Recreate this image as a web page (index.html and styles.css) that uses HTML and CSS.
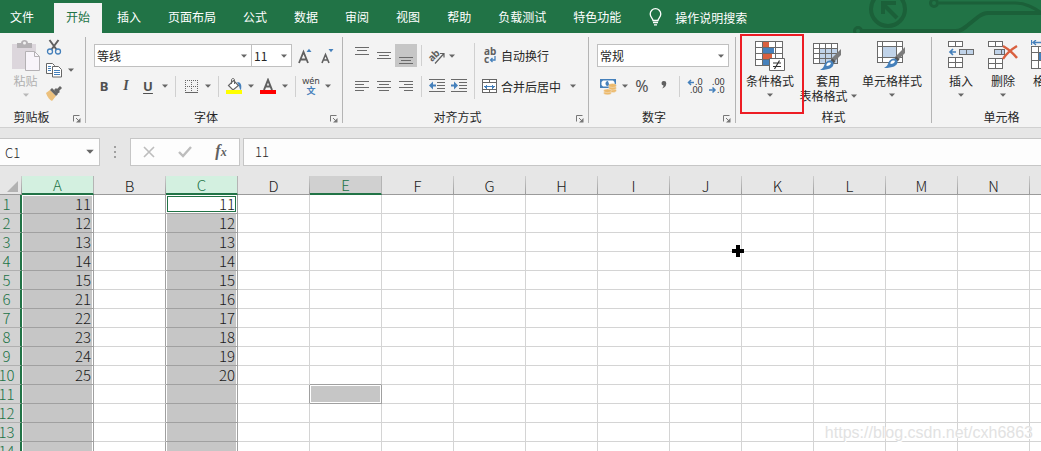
FILE: index.html
```html
<!DOCTYPE html>
<html lang="zh-CN">
<head>
<meta charset="utf-8">
<title>工作簿</title>
<link rel="stylesheet" href="styles.css">
</head>
<body>
<svg class="defs" width="0" height="0" aria-hidden="true">
  <symbol id="caret" viewBox="0 0 6 4"><path d="M0 0.5h6L3 3.8z" fill="currentColor"/></symbol>
  <symbol id="launch" viewBox="0 0 8 8"><path d="M.5 6.500V.5H6.500M3 3l3 3" fill="none" stroke="#777"/><path d="M7.500 3v4.500H3z" fill="#777"/></symbol>
  <symbol id="brush" viewBox="0 0 24 22"><path d="M22 0v6l-7 7-3-3z" fill="#7b7b7b"/><path d="M13.500 9.500l3 3-2 2-3-3z" fill="#555"/><path d="M10.500 11.500c2-.5 4.500 1.500 4 4-.6 3-4 5.500-13.500 5.500 3-1.500 3.500-3 4.500-5.500.8-2 2.500-3.600 5-4z" fill="#4580bb"/><path d="M7.500 15.500c1-2 3-2.500 4.500-1.500-.5 2-2 3-4.500 3z" fill="#fff"/></symbol>
</svg>

<header class="tabs">
  <svg class="circuit" width="190" height="33" viewBox="0 0 190 33" fill="none" stroke="#1b6039" stroke-width="4" aria-hidden="true">
    <circle cx="37" cy="9" r="17"/><path d="M46 18L32 4M32 14V3h13"/>
    <circle cx="83" cy="3" r="3.500" stroke-width="3"/><path d="M88 3h76c10 0 18 4 30 12" stroke-width="3"/>
    <circle cx="7" cy="31" r="3.500" stroke-width="3"/><path d="M11 31h94c6 0 8-3 12-6l10-8c4-3 6-4 10-4h53"/>
  </svg>
  <nav class="tab-list">
    <button class="tab file">文件</button>
    <button class="tab active">开始</button>
    <button class="tab">插入</button>
    <button class="tab">页面布局</button>
    <button class="tab">公式</button>
    <button class="tab">数据</button>
    <button class="tab">审阅</button>
    <button class="tab">视图</button>
    <button class="tab">帮助</button>
    <button class="tab">负载测试</button>
    <button class="tab">特色功能</button>
  </nav>
  <button class="tell-me">
    <svg width="13" height="18" viewBox="0 0 13 18" fill="none" stroke="#fff" stroke-width="1.300"><path d="M4 12.500c0-2-2.800-3.200-2.800-6.500a5.300 5.300 0 0 1 10.600 0c0 3.300-2.800 4.500-2.800 6.500zM4 14.500h5M5 16.800h3"/></svg>
    操作说明搜索
  </button>
</header>

<main class="ribbon">
  <section class="group clipboard">
    <div class="body">
      <button class="big paste" disabled>
        <svg width="28" height="32" viewBox="0 0 28 32"><path d="M0 4h24v25H0z" fill="#dcd6dc"/><path d="M5 3h4c0-4 7-4 7 0h4v5H5z" fill="#b4b1b4"/><circle cx="12.500" cy="3" r="1.500" fill="#f3f3f3"/><path d="M13.500 11.500h9l5 5v14h-14z" fill="#f8f4fa" stroke="#b4b1b4"/><path d="M22.500 11.500v5h5" fill="none" stroke="#b4b1b4"/></svg>
        <span>粘贴</span>
        <svg class="caret"><use href="#caret"/></svg>
      </button>
      <div class="stack">
        <div class="line"><button class="tool" aria-label="剪切">
          <svg width="16" height="16" viewBox="0 0 16 16" fill="none"><path d="M3.500 1l7 9.500M12.500 1l-7 9.500" stroke="#606060" stroke-width="2"/><circle cx="4" cy="12.500" r="2.500" stroke="#4580bb" stroke-width="1.300"/><circle cx="12" cy="12.500" r="2.500" stroke="#4580bb" stroke-width="1.300"/></svg></button></div>
        <div class="line"><button class="tool" aria-label="复制">
          <svg width="16" height="15" viewBox="0 0 16 15" fill="#fff" stroke="#666"><path d="M.5.500h6l2 2v8h-8z"/><path d="M2 3.500h3M2 5.500h3M2 7.500h3" stroke="#4580bb"/><path d="M6.500 3.500h6l3 3v7.500h-9z"/><path d="M8 7.500h6M8 9.500h6M8 11.500h6" stroke="#4580bb"/></svg></button><button class="drop" aria-label="复制选项"><svg class="caret"><use href="#caret"/></svg></button></div>
        <div class="line"><button class="tool" aria-label="格式刷">
          <svg width="17" height="15" viewBox="0 0 17 15"><path d="M0 7l4-3 6 6-4 5c-2-1-5-4-6-8z" fill="#ecc07c"/><path d="M4 4l2-2 6 6-2 2z" fill="#666"/><path d="M8 4l2-2 1 1 3-3 2 2-3 3 1 1-3 2z" fill="#666"/></svg></button></div>
      </div>
    </div>
    <footer class="caption"><h2>剪贴板</h2><button class="launcher" aria-label="剪贴板设置"><svg width="8" height="8"><use href="#launch"/></svg></button></footer>
  </section>

  <section class="group font">
    <div class="body rows">
      <div class="line fields">
        <label class="combo family"><select aria-label="字体"><option>等线</option></select><svg class="caret"><use href="#caret"/></svg></label>
        <label class="combo size"><select aria-label="字号"><option>11</option></select><svg class="caret"><use href="#caret"/></svg></label>
        <button class="tool grow" aria-label="增大字号"><svg width="15" height="16" viewBox="0 0 15 16"><path d="M1 15L5.500 4 10 15M2.700 11.500h5.600" fill="none" stroke="#606060" stroke-width="1.800"/><path d="M8.500 4h5L11 .8z" fill="#4580bb"/></svg></button>
        <button class="tool" aria-label="减小字号"><svg width="15" height="16" viewBox="0 0 15 16"><path d="M2 15L5.500 6.500 9 15M3.200 12h4.600" fill="none" stroke="#606060" stroke-width="1.600"/><path d="M8.500 1h5L11 4.200z" fill="#4580bb"/></svg></button>
      </div>
      <div class="line format">
        <button class="tool letter">B</button>
        <button class="tool letter italic">I</button>
        <button class="tool letter underline">U</button>
        <button class="drop" aria-label="下划线选项"><svg class="caret"><use href="#caret"/></svg></button>
        <i class="sep"></i>
        <button class="tool" aria-label="边框"><svg width="13" height="13" viewBox="0 0 13 13" shape-rendering="crispEdges" fill="none" stroke="#666"><path d="M0 .5h13M0 6.500h13M.5 0v12M6.500 0v12M12.500 0v12" stroke-dasharray="1 1"/><path d="M0 12.500h13"/></svg></button>
        <button class="drop" aria-label="边框选项"><svg class="caret"><use href="#caret"/></svg></button>
        <i class="sep"></i>
        <button class="tool" aria-label="填充颜色"><svg width="16" height="16" viewBox="0 0 16 16"><path d="M7.500 2.500l5 5-5.500 4.500-4.500-4.500z" fill="#fff" stroke="#666" stroke-width="1.200"/><path d="M5.500 6V2c0-2 3-2 3 0v4" fill="none" stroke="#666"/><path d="M11 4c4 0 5 3 4 8-2-1-1-4-4-8z" fill="#4580bb"/><path d="M0 12h16v4H0z" fill="#ff0"/></svg></button>
        <button class="drop" aria-label="填充颜色选项"><svg class="caret"><use href="#caret"/></svg></button>
        <button class="tool" aria-label="字体颜色"><svg width="16" height="16" viewBox="0 0 16 16"><path d="M4 12L8 2l4 10M5.500 8.500h5" fill="none" stroke="#606060" stroke-width="2"/><path d="M0 12h16v4H0z" fill="red"/></svg></button>
        <button class="drop" aria-label="字体颜色选项"><svg class="caret"><use href="#caret"/></svg></button>
        <i class="sep"></i>
        <button class="tool phonetic" aria-label="拼音"><span>wén</span><b>文</b></button>
        <button class="drop" aria-label="拼音选项"><svg class="caret"><use href="#caret"/></svg></button>
      </div>
    </div>
    <footer class="caption"><h2>字体</h2><button class="launcher" aria-label="字体设置"><svg width="8" height="8"><use href="#launch"/></svg></button></footer>
  </section>

  <section class="group align">
    <div class="body">
      <div class="rows">
        <div class="line fields">
          <button class="tool" aria-label="顶端对齐"><svg class="bars" width="14" height="20" viewBox="0 0 14 20"><path d="M0 1.500h14M2 4.500h10M0 8.500h14"/></svg></button>
          <button class="tool" aria-label="垂直居中"><svg class="bars" width="14" height="20" viewBox="0 0 14 20"><path d="M0 6.500h14M2 9.500h10M0 12.500h14"/></svg></button>
          <button class="tool pressed" aria-label="底端对齐"><svg class="bars" width="14" height="20" viewBox="0 0 14 20"><path d="M0 11.500h14M2 14.500h10M0 17.500h14"/></svg></button>
          <i class="sep"></i>
          <button class="tool" aria-label="方向"><svg width="18" height="18" viewBox="0 0 18 18"><text class="tilt" x="0" y="12" transform="rotate(-45 6 9)">ab</text><path d="M7 16.500L15.500 7M12 6.500h4v4" fill="none" stroke="#606060" stroke-width="1.200"/></svg></button>
          <button class="drop narrow" aria-label="方向选项"><svg class="caret"><use href="#caret"/></svg></button>
        </div>
        <div class="line">
          <button class="tool" aria-label="左对齐"><svg class="bars" width="14" height="12" viewBox="0 0 14 12"><path d="M0 1.500h14M0 4.500h9M0 7.500h14M0 10.500h9"/></svg></button>
          <button class="tool" aria-label="居中"><svg class="bars" width="14" height="12" viewBox="0 0 14 12"><path d="M0 1.500h14M2 4.500h10M0 7.500h14M2 10.500h10"/></svg></button>
          <button class="tool" aria-label="右对齐"><svg class="bars" width="14" height="12" viewBox="0 0 14 12"><path d="M0 1.500h14M5 4.500h9M0 7.500h14M5 10.500h9"/></svg></button>
          <i class="sep"></i>
          <button class="tool" aria-label="减少缩进"><svg width="16" height="14" viewBox="0 0 16 14"><path class="ink" d="M0 .5h16M8 3.500h8M8 6.500h8M8 9.500h8M0 12.500h16"/><path d="M0 6.500L4 2.500v3h3v2H4v3z" fill="#4580bb"/></svg></button>
          <button class="tool" aria-label="增加缩进"><svg width="16" height="14" viewBox="0 0 16 14"><path class="ink" d="M0 .5h16M8 3.500h8M8 6.500h8M8 9.500h8M0 12.500h16"/><path d="M7 6.500L3 2.500v3H0v2h3v3z" fill="#4580bb"/></svg></button>
        </div>
      </div>
      <i class="sep tall"></i>
      <div class="rows">
        <div class="line fields"><button class="wide"><svg width="16" height="18" viewBox="0 0 16 18"><text class="abc" x="2" y="8">ab</text><text class="abc" x="2" y="16">c</text><path d="M13 9v4H9M10.500 11L8.500 13l2 2" fill="none" stroke="#4580bb" stroke-width="1.300"/></svg>自动换行</button></div>
        <div class="line"><button class="wide"><svg width="16" height="15" viewBox="0 0 16 15" shape-rendering="crispEdges" fill="#fff" stroke="#666"><path d="M.5.500h14v13H.5zM.5 3.500h14M.5 10.500h14M7.500.500v3M7.500 10.500v3"/><path d="M2 7.500h11M4.500 5.500v4M3.500 6.500v2M10.500 5.500v4M11.500 6.500v2" stroke="#4580bb"/></svg>合并后居中</button><button class="drop" aria-label="合并选项"><svg class="caret"><use href="#caret"/></svg></button></div>
      </div>
    </div>
    <footer class="caption"><h2>对齐方式</h2><button class="launcher" aria-label="对齐设置"><svg width="8" height="8"><use href="#launch"/></svg></button></footer>
  </section>

  <section class="group number">
    <div class="body rows">
      <div class="line fields"><label class="combo"><select aria-label="数字格式"><option>常规</option></select><svg class="caret"><use href="#caret"/></svg></label></div>
      <div class="line">
        <button class="tool" aria-label="会计数字格式"><svg width="17" height="17" viewBox="0 0 17 17"><path d="M0 1h16v9H0z" fill="#4580bb"/><path d="M3 2.500h10L14.500 4v3L13 8.500H3L1.500 7V4z" fill="#fff"/><circle cx="8" cy="5.500" r="2.500" fill="#4580bb"/><path d="M8 3h3v3H9z" fill="#fff"/><g fill="#ecb96b" stroke="#f3f3f3" stroke-width=".4"><ellipse cx="12.500" cy="12.500" rx="3.900" ry="2"/><ellipse cx="12.500" cy="10" rx="3.900" ry="2"/><ellipse cx="12.500" cy="7.500" rx="3.900" ry="2"/><ellipse cx="7.500" cy="15" rx="3.900" ry="1.800"/><ellipse cx="7.500" cy="12.800" rx="3.900" ry="1.800"/></g></svg></button>
        <button class="drop" aria-label="会计格式选项"><svg class="caret"><use href="#caret"/></svg></button>
        <button class="tool percent">%</button>
        <button class="tool" aria-label="千位分隔样式"><svg width="6" height="16" viewBox="0 0 6 16"><path d="M3 3a2.300 2.300 0 0 1 2.300 2.300C5.300 8 3.500 10 1 10.500c1-1 1.500-1.800 1.500-3A2.200 2.200 0 0 1 3 3z" fill="#606060"/></svg></button>
        <i class="sep"></i>
        <button class="tool" aria-label="增加小数位数"><svg width="17" height="16" viewBox="0 0 17 16"><path d="M1 4.500h6M4 2l-2.500 2.500L4 7" fill="none" stroke="#4580bb" stroke-width="1.500"/><text class="dec" x="8" y="7">.0</text><text class="dec" x="3" y="15">.00</text></svg></button>
        <button class="tool" aria-label="减少小数位数"><svg width="17" height="16" viewBox="0 0 17 16"><path d="M0 12h6M3.500 9.500L6 12l-2.500 2.500" fill="none" stroke="#4580bb" stroke-width="1.500"/><text class="dec" x="3" y="7">.00</text><text class="dec" x="8" y="15">.0</text></svg></button>
      </div>
    </div>
    <footer class="caption"><h2>数字</h2><button class="launcher" aria-label="数字设置"><svg width="8" height="8"><use href="#launch"/></svg></button></footer>
  </section>

  <section class="group styles">
    <div class="body">
      <button class="big marked">
        <svg width="30" height="32" viewBox="0 0 30 32"><path d="M.5 1.500h27v24H.5z" fill="#fff"/><path d="M8 1h6v6H8zM8 13.500h9v6H8z" fill="#d9603f"/><path d="M8 7.500h11v5.500H8zM8 20h6v5H8z" fill="#4580bb"/><path class="ink" d="M.5 1.500h27v24H.5zM.5 7.500h27M.5 13.500h27M.5 19.500h27M7.500 1.500v24M20.500 1.500v24"/><path d="M14.500 18.500h15v12h-15z" fill="#fff" stroke="#666"/><path d="M18 23h8M18 26.500h8M24.500 20.500l-5 8.500" fill="none" stroke="#333" stroke-width="1.200"/></svg>
        <span>条件格式</span><svg class="caret"><use href="#caret"/></svg>
      </button>
      <button class="big">
        <svg width="30" height="32" viewBox="0 0 30 32"><path d="M.5 3.500h24v20H.5z" fill="#fff"/><path d="M6.500 8.500h18v15h-18z" fill="#c0d3e9"/><path class="ink" d="M.5 3.500h24v20H.5zM.5 8.500h24M.5 13.500h24M.5 18.500h24M6.500 3.500v20M12.500 3.500v20M18.500 3.500v20"/><svg x="6" y="9" width="24" height="22"><use href="#brush"/></svg></svg>
        <span>套用</span><span class="with-caret">表格格式<svg class="caret"><use href="#caret"/></svg></span>
      </button>
      <button class="big roomy">
        <svg width="30" height="32" viewBox="0 0 30 32"><path d="M.5 1.500h25v21H.5z" fill="#fff"/><path d="M5.500 6.500h14v11h-14z" fill="#c0d3e9"/><path class="ink" d="M.5 1.500h25v21H.5zM.5 6.500h25M.5 17.500h25M5.500 1.500v21M19.500 1.500v21"/><svg x="6" y="7" width="24" height="22"><use href="#brush"/></svg></svg>
        <span>单元格样式</span><svg class="caret"><use href="#caret"/></svg>
      </button>
    </div>
    <footer class="caption"><h2>样式</h2></footer>
  </section>

  <section class="group cells">
    <div class="body">
      <button class="big">
        <svg width="26" height="32" viewBox="0 0 26 32"><path class="ink paper" d="M.5 1.500h14v5H.5zM7.500 1.500v5M.5 17.500h14v10H.5zM.5 22.500h14M7.500 17.500v10"/><path class="ink tint" d="M11.500 9.500h14v5h-14zM18.500 9.500v5"/><path d="M2 12h6M5 9l-3 3 3 3" fill="none" stroke="#4580bb" stroke-width="1.700"/></svg>
        <span>插入</span><svg class="caret"><use href="#caret"/></svg>
      </button>
      <button class="big">
        <svg width="30" height="32" viewBox="0 0 30 32"><path class="ink paper" d="M.5 1.500h14v5H.5zM7.500 1.500v5M.5 18.500h14v10H.5zM.5 23.500h14M7.500 18.500v10"/><path class="ink tint" d="M6.500 9.500h10v5h-10zM13.500 9.500v5"/><path d="M15 6c5 3 10 7 14 12M29 6c-5 3-11 8-14 13" fill="none" stroke="#d9603f" stroke-width="2.400"/></svg>
        <span>删除</span><svg class="caret"><use href="#caret"/></svg>
      </button>
      <button class="big">
        <svg width="28" height="32" viewBox="0 0 28 32"><path d="M.5 0v5M2 2.500h25M5 0L2 2.500 5 5M27.500 0v5" fill="none" stroke="#4580bb" stroke-width="1.300"/><path class="ink paper" d="M.5 6.500h27v22H.5zM.5 12.500h27M.5 20.500h27M7.500 6.500v22M20.500 6.500v22"/><path d="M8 13h12v7H8z" fill="#4580bb"/></svg>
        <span>格式</span><svg class="caret"><use href="#caret"/></svg>
      </button>
    </div>
    <footer class="caption"><h2>单元格</h2></footer>
  </section>
</main>

<div class="formula-bar">
  <label class="name-box"><input value="C1" aria-label="名称框"><svg class="caret large"><use href="#caret"/></svg></label>
  <svg class="grip" width="2" height="12" viewBox="0 0 2 12" fill="#a0a0a0"><path d="M0 0h2v2H0zM0 5h2v2H0zM0 10h2v2H0z"/></svg>
  <div class="entry">
    <button aria-label="取消"><svg width="12" height="12" viewBox="0 0 12 12" fill="none" stroke="#bdbdbd" stroke-width="1.600"><path d="M1 1l10 10M11 1L1 11"/></svg></button>
    <button aria-label="输入"><svg width="14" height="12" viewBox="0 0 14 12" fill="none" stroke="#bdbdbd" stroke-width="2.400"><path d="M1 6l4 4 8-9"/></svg></button>
    <button class="fx" aria-label="插入函数">f<small>x</small></button>
  </div>
  <input class="formula" value="11" aria-label="编辑栏">
</div>

<div class="sheet">
  <table class="grid">
    <colgroup><col class="index"><col span="15"></colgroup>
    <thead><tr><th class="corner"><svg width="11" height="11" viewBox="0 0 11 11"><path d="M11 0v11H0z" fill="#b2b2b2"/></svg></th><th class="picked">A</th><th>B</th><th class="picked">C</th><th>D</th><th class="also">E</th><th>F</th><th>G</th><th>H</th><th>I</th><th>J</th><th>K</th><th>L</th><th>M</th><th>N</th><th>O</th></tr></thead>
    <tbody id="rows"></tbody>
  </table>
  <svg class="pointer" width="12" height="12" viewBox="0 0 12 12" aria-hidden="true"><path d="M4 0h4v4h4v4H8v4H4V8H0V4h4z"/></svg>
  <p class="watermark">https://blog.csdn.net/cxh6863</p>
</div>
<script src="grid.js"></script>
</body>
</html>
```
FILE: styles.css
```css
* { box-sizing: border-box; }
body {
  margin: 0;
  height: 100vh;
  display: flex;
  flex-direction: column;
  overflow: hidden;
  background: #e6e6e6;
  color: #262626;
  font: 12px/15px "Noto Sans CJK SC", sans-serif;
}
button, input, select { font: inherit; color: inherit; }
button { border: 0; padding: 0; background: none; white-space: nowrap; }
svg { display: block; flex: none; }
svg text { line-height: 1; }
.defs { position: absolute; }
.caret { width: 6px; height: 4px; color: #666; }
.caret.large { width: 8px; height: 5px; }

.tabs { position: relative; display: flex; flex: none; height: 33px; padding-top: 3px; background: #217346; color: #fff; }
.circuit { position: absolute; top: 0; right: 0; }
.tab-list { display: flex; gap: 3px; }
.tab { padding: 0 12px 3px; }
.tab.file { padding: 0 17px 3px 10px; }
.tab.active { background: #f3f3f3; color: #217346; }
.tell-me { display: flex; align-items: center; gap: 13px; margin-left: 16px; padding-bottom: 2px; }

.ribbon { display: flex; flex: none; padding: 4px 0; background: #f3f3f3; border-bottom: 1px solid #d0d0d0; overflow: hidden; }
.group { display: flex; flex: none; flex-direction: column; border-right: 1px solid #b4b4b4; }
.body { display: flex; height: 72px; }
.rows { display: flex; flex-direction: column; gap: 8px; padding-top: 7px; }
.line { display: flex; align-items: center; height: 22px; }
.line.fields { height: 23px; }
.caption { display: flex; height: 14px; }
.caption h2 { flex: 1; margin: 0; font: inherit; text-align: center; }
.launcher { display: flex; align-items: flex-end; justify-content: center; width: 16px; }

.tool { display: flex; align-items: center; justify-content: center; width: 22px; height: 22px; }
.tool.pressed { height: 23px; background: #c6c6c6; }
.drop { display: flex; align-items: center; justify-content: center; width: 12px; height: 22px; }
.drop.narrow { width: 8px; }
.sep { width: 1px; height: 21px; margin: 0 4px; background: #d0d0d0; }
.sep.tall { height: 56px; margin-top: 6px; }
.bars, .ink { fill: none; stroke: #6a6a6a; shape-rendering: crispEdges; }
.ink.paper { fill: #fff; }
.ink.tint { fill: #c0d3e9; }

.clipboard { width: 86px; }
.clipboard .body { padding-left: 8px; }
.clipboard .caption h2 { padding-right: 6px; }
.stack { display: flex; flex-direction: column; gap: 3px; }
.stack .line, .stack .tool, .stack .drop { height: 20px; }
.big.paste { width: 35px; color: #b0b0b0; }
.paste .caret { color: #b8b8b8; }

.big { display: flex; flex-direction: column; align-items: center; width: 58px; height: 72px; padding-top: 3px; }
.big > .caret { margin-top: 5px; }
.big span { height: 15px; margin-top: 1px; }
.big span + span { margin-top: 0; }
.with-caret { display: flex; align-items: center; gap: 3px; }
.big.roomy { width: 70px; }

.font { width: 257px; }
.font .rows, .number .rows { padding-left: 8px; }
.font .format { margin-left: -1px; }
.combo { position: relative; display: block; width: 132px; height: 23px; }
.combo.family { width: 158px; }
.combo.size { width: 41px; margin-left: -1px; }
.combo select { appearance: none; width: 100%; height: 100%; padding: 0 2px; border: 1px solid #c0c0c0; border-radius: 0; background: #fff; }
.combo .caret { position: absolute; right: 5px; top: 10px; }
.grow { margin-left: 2px; }
.letter { font: bold 13px "Noto Sans", sans-serif; color: #505050; }
.italic { font-style: italic; font-family: "Liberation Serif", serif; font-size: 14px; }
.underline { text-decoration: underline; text-underline-offset: 2px; }
.phonetic { flex-direction: column; color: #444; font: 9px/10px "Noto Sans", sans-serif; }
.phonetic b { color: #4580bb; font: bold 9px/10px "Noto Sans CJK SC", sans-serif; }
.percent { font: 16px "Noto Sans", sans-serif; color: #505050; }

.align { width: 246px; }
.align .body { padding-left: 8px; }
.wide { display: flex; align-items: center; gap: 3px; height: 22px; padding: 0 6px 0 3px; }
.tilt { font: bold 10px "Noto Sans", sans-serif; fill: #606060; }
.abc { font: bold 10px "Noto Sans", sans-serif; fill: #606060; }
.dec { font: 9px "Noto Sans", sans-serif; fill: #333; }

.number { width: 147px; }
.styles { width: 196px; }
.styles .body { padding-left: 5px; }
.marked { position: relative; }
.marked::after { content: ""; position: absolute; inset: -3px -5px -5px -1px; border: 2px solid #ed1c24; }
.cells { width: 140px; }
.cells .body { padding-left: 8px; }
.cells .big { flex: none; width: 42px; }

.formula-bar { display: flex; flex: none; align-items: center; padding-top: 10px; height: 38px; }
.name-box { position: relative; width: 100px; height: 28px; }
.name-box input { width: 100%; height: 100%; padding: 0 5px; border: 1px solid #c6c6c6; border-left: 0; background: #fdfdfd; outline: 0; }
.name-box .caret { position: absolute; right: 6px; top: 11px; }
.grip { margin: 0 14px; }
.entry { display: flex; width: 110px; height: 28px; margin-right: 3px; border: 1px solid #c6c6c6; background: #fdfdfd; }
.entry button { display: flex; flex: 1; align-items: center; justify-content: center; }
.entry .fx { align-items: baseline; font: italic bold 16px/24px "Liberation Serif", serif; color: #606060; }
.fx small { font-size: 12px; }
.formula { flex: 1; min-width: 0; height: 28px; padding: 0 11px 2px; border: 1px solid #c6c6c6; border-right: 0; background: #fdfdfd; outline: 0; }
.name-box input, .formula { font-size: 13px; font-weight: 300; }

.sheet { position: relative; flex: 1; min-height: 0; padding-top: 10px; overflow: hidden; }
.grid { width: 1102px; table-layout: fixed; border-collapse: separate; border-spacing: 0; color: #1a1a1a; font: 300 15px/18px "Noto Sans CJK SC", sans-serif; }
.grid col { width: 72px; }
.grid col.index { width: 22px; }
.grid th, .grid td { height: 19px; padding: 0 2px; font-weight: 300; line-height: 18px; overflow: hidden; }
.grid thead th {
  border-bottom: 1px solid #999;
  border-right: 1px solid;
  border-image: linear-gradient(#d0d0d0, #999) 1;
  line-height: 17px;
}
.grid thead .corner { padding: 5px 3px 2px 7px; }
.grid thead .picked { border-bottom: 2px solid #217346; border-image: none; border-right: 1px solid #b4b4b4; background: #d3f0e0; color: #217346; }
.grid thead .also { border-bottom: 2px solid #217346; border-image: none; border-right: 1px solid #b4b4b4; background: #d0d0d0; color: #217346; }
.grid tbody th { padding: 0 4px 0 0; border-bottom: 1px solid #b0b0b0; border-right: 2px solid #217346; background: #d2d2d2; color: #217346; text-indent: -3px; }
.grid td { border-right: 1px solid #d4d4d4; border-bottom: 1px solid #d4d4d4; background: #fff; text-align: right; }
.grid td.edge { border-right-color: #a0a0a0; }
.grid td.fill { border-right-color: #a0a0a0; border-bottom-color: #a0a0a0; background: #c6c6c6; box-shadow: inset 1px 0 #fff, inset -1px 0 #fff; }
.grid tbody tr:first-child .fill { box-shadow: inset 1px 0 #fff, inset -1px 0 #fff, inset 0 1px #fff; }
.grid tbody tr:first-child .current { background: #fff; box-shadow: inset 0 0 0 1px #fff, inset 0 0 0 2px #217346; }
.grid td.boxed { box-shadow: inset 0 0 0 1px #fff; }
.grid td.above { border-bottom-color: #a0a0a0; }
.pointer { position: absolute; left: 732px; top: 79px; }
.watermark { position: absolute; right: 8px; bottom: 8px; margin: 0; font: 16px/20px "Liberation Sans", Arial, sans-serif; color: #e2e2e2; text-shadow: 1px 1px #fff; }
```
FILE: grid.js
```js
const columnA = [11, 12, 13, 14, 15, 21, 22, 23, 24, 25];
const columnC = [11, 12, 13, 14, 15, 16, 17, 18, 19, 20];
const body = document.getElementById("rows");

for (let r = 1; r <= 14; r++) {
  const row = body.insertRow();
  const head = document.createElement("th");
  head.scope = "row";
  head.textContent = r;
  row.append(head);
  for (let c = 0; c < 15; c++) {
    const cell = row.insertCell();
    if (c === 0 || c === 2) {
      cell.className = "fill";
      cell.textContent = (c === 0 ? columnA : columnC)[r - 1] ?? "";
    }
    if (c === 1) cell.className = "edge";
    if (c === 2 && r === 1) cell.classList.add("current");
    if (c === 3 && r === 11) cell.className = "edge";
    if (c === 4 && r === 10) cell.className = "above";
    if (c === 4 && r === 11) cell.className = "fill boxed";
  }
}
```
